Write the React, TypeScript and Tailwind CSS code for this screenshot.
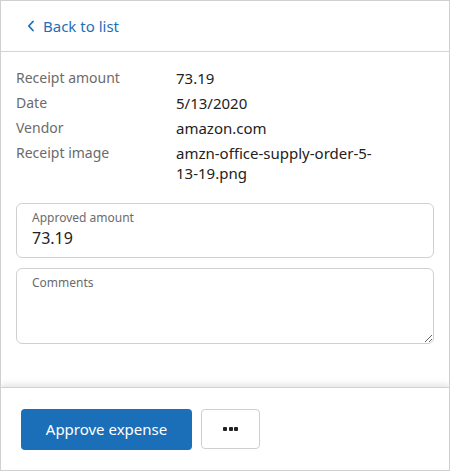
import React from 'react';

const rows: [string, React.ReactNode][] = [
    ['Receipt amount', '73.19'],
    ['Date', '5/13/2020'],
    ['Vendor', 'amazon.com'],
    ['Receipt image', <>amzn-office-supply-order-5-<br />13-19.png</>],
];

export default function App() {
    return (
        <div
            className="h-[471px] w-[450px] flex flex-col bg-white border border-[#d0d0d0] overflow-hidden text-[#222]"
            style={{ fontFamily: '"Noto Sans", "Open Sans", sans-serif' }}
        >
            {/* Header */}
            <div className="h-[51px] shrink-0 flex items-center pl-[26px] border-b border-[#d4d4d4]">
                <button className="flex items-center gap-[8px] text-[15px] text-[#1f6fb6]">
                    <svg width="8" height="12" viewBox="0 0 8 12" fill="none">
                        <path d="M6 1.5L1.8 6L6 10.5" stroke="currentColor" strokeWidth="1.8" strokeLinecap="round" strokeLinejoin="round" />
                    </svg>
                    Back to list
                </button>
            </div>

            {/* Details */}
            <div className="flex-1 px-[15px] pt-[16px]">
                <div className="flex flex-col gap-[5px]">
                    {rows.map(([label, value]) => (
                        <div key={label} className="flex leading-5">
                            <div className="w-[160px] shrink-0 text-[14px] text-[#6b6b6b]">{label}</div>
                            <div className="text-[15px] text-[#222]">{value}</div>
                        </div>
                    ))}
                </div>

                <div className="mt-[20px] h-[55px] border border-[#d0d0d0] rounded-[6px] px-[15px] pt-[5px]">
                    <div className="text-[12px] leading-[18px] text-[#6b6b6b]">Approved amount</div>
                    <div className="text-[16px] leading-[22px] text-[#222]">73.19</div>
                </div>

                <div className="relative mt-[10px] h-[76px] border border-[#d0d0d0] rounded-[6px] px-[15px] pt-[5px]">
                    <div className="text-[12px] leading-[18px] text-[#6b6b6b]">Comments</div>
                    <textarea className="absolute inset-0 resize-y bg-transparent outline-none" aria-label="Comments" />
                </div>
            </div>

            {/* Footer */}
            <div className="h-[83px] shrink-0 border-t border-[#d2d2d2] shadow-[0_-3px_6px_rgba(0,0,0,0.1)] flex items-center gap-[9px] px-[20px]">
                <button className="h-[41px] w-[171px] rounded-[4px] bg-[#1b6fb8] text-white text-[15px]">
                    Approve expense
                </button>
                <button className="h-[40px] w-[59px] rounded-[4px] border border-[#cfcfcf] bg-white flex items-center justify-center gap-[1.5px]">
                    <span className="w-[4px] h-[4px] rounded-[1px] bg-[#222]" />
                    <span className="w-[4px] h-[4px] rounded-[1px] bg-[#222]" />
                    <span className="w-[4px] h-[4px] rounded-[1px] bg-[#222]" />
                </button>
            </div>
        </div>
    );
}
